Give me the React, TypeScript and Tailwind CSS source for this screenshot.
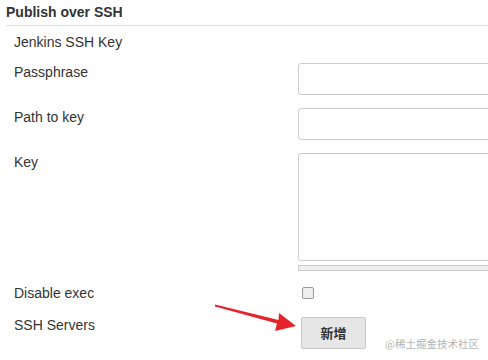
import React from "react";

function Row({ label, children, className = "" }: { label: string; children?: React.ReactNode; className?: string }) {
  return (
    <div className={"flex items-start " + className}>
      <div className="w-[298px] shrink-0 pl-[14px] leading-[16px]">{label}</div>
      <div className="flex-1 min-w-0">{children}</div>
    </div>
  );
}

export default function App() {
  return (
    <div className="w-[488px] h-[360px] overflow-hidden relative bg-white text-[#333] text-[14px] font-['Liberation_Sans',Arial,sans-serif]">
      <div className="ml-[6px] h-[26px] border-b border-[#dddddd] font-bold leading-[16px] pt-[4px]">
        Publish over SSH
      </div>
      <div className="h-[37px] pt-[8px] pl-[14px] leading-[16px]">Jenkins SSH Key</div>

      <Row label="Passphrase" className="[&>div:first-child]:pt-[1px]">
        <div className="w-[260px] h-[32px] border border-[#cccccc] rounded-[3px] bg-white" />
      </Row>
      <Row label="Path to key" className="mt-[13px] [&>div:first-child]:pt-[1px]">
        <div className="w-[260px] h-[32px] border border-[#cccccc] rounded-[3px] bg-white" />
      </Row>
      <Row label="Key" className="mt-[13px] [&>div:first-child]:pt-[1px]">
        <div className="w-[260px] h-[108px] border border-[#cccccc] rounded-[3px] bg-white" />
        <div className="mt-[4px] w-[260px] h-[6px] border border-[#cccccc] bg-[#eeeeee]" />
      </Row>
      <Row label="Disable exec" className="mt-[14px]">
        <div className="ml-[4px] mt-[2px] w-[12px] h-[12px] rounded-[2px] border border-[#9a9a9a] bg-[#eeeeee]" />
      </Row>
      <Row label="SSH Servers" className="mt-[16px]">
        <div className="ml-[3px] w-[65px] h-[32px] border border-[#c8c8c8] rounded-[2px] bg-[#e6e6e6] flex items-center justify-center text-[13px] font-semibold text-[#333] font-['Noto_Sans_CJK_SC',sans-serif]">
          新增
        </div>
      </Row>

      <svg className="absolute left-0 top-0 pointer-events-none" width="488" height="360" viewBox="0 0 488 360">
        <polygon
          points="215,304.5 278.5,320 279,313 296,326 275,331 277,323.5 215,306.5"
          fill="#e6222b"
        />
      </svg>

      <div className="absolute left-[385px] top-[337px] text-[10.5px] leading-[14px] text-[#b4b4b4] font-['Noto_Sans_CJK_SC',sans-serif] whitespace-nowrap">
        @稀土掘金技术社区
      </div>
    </div>
  );
}
